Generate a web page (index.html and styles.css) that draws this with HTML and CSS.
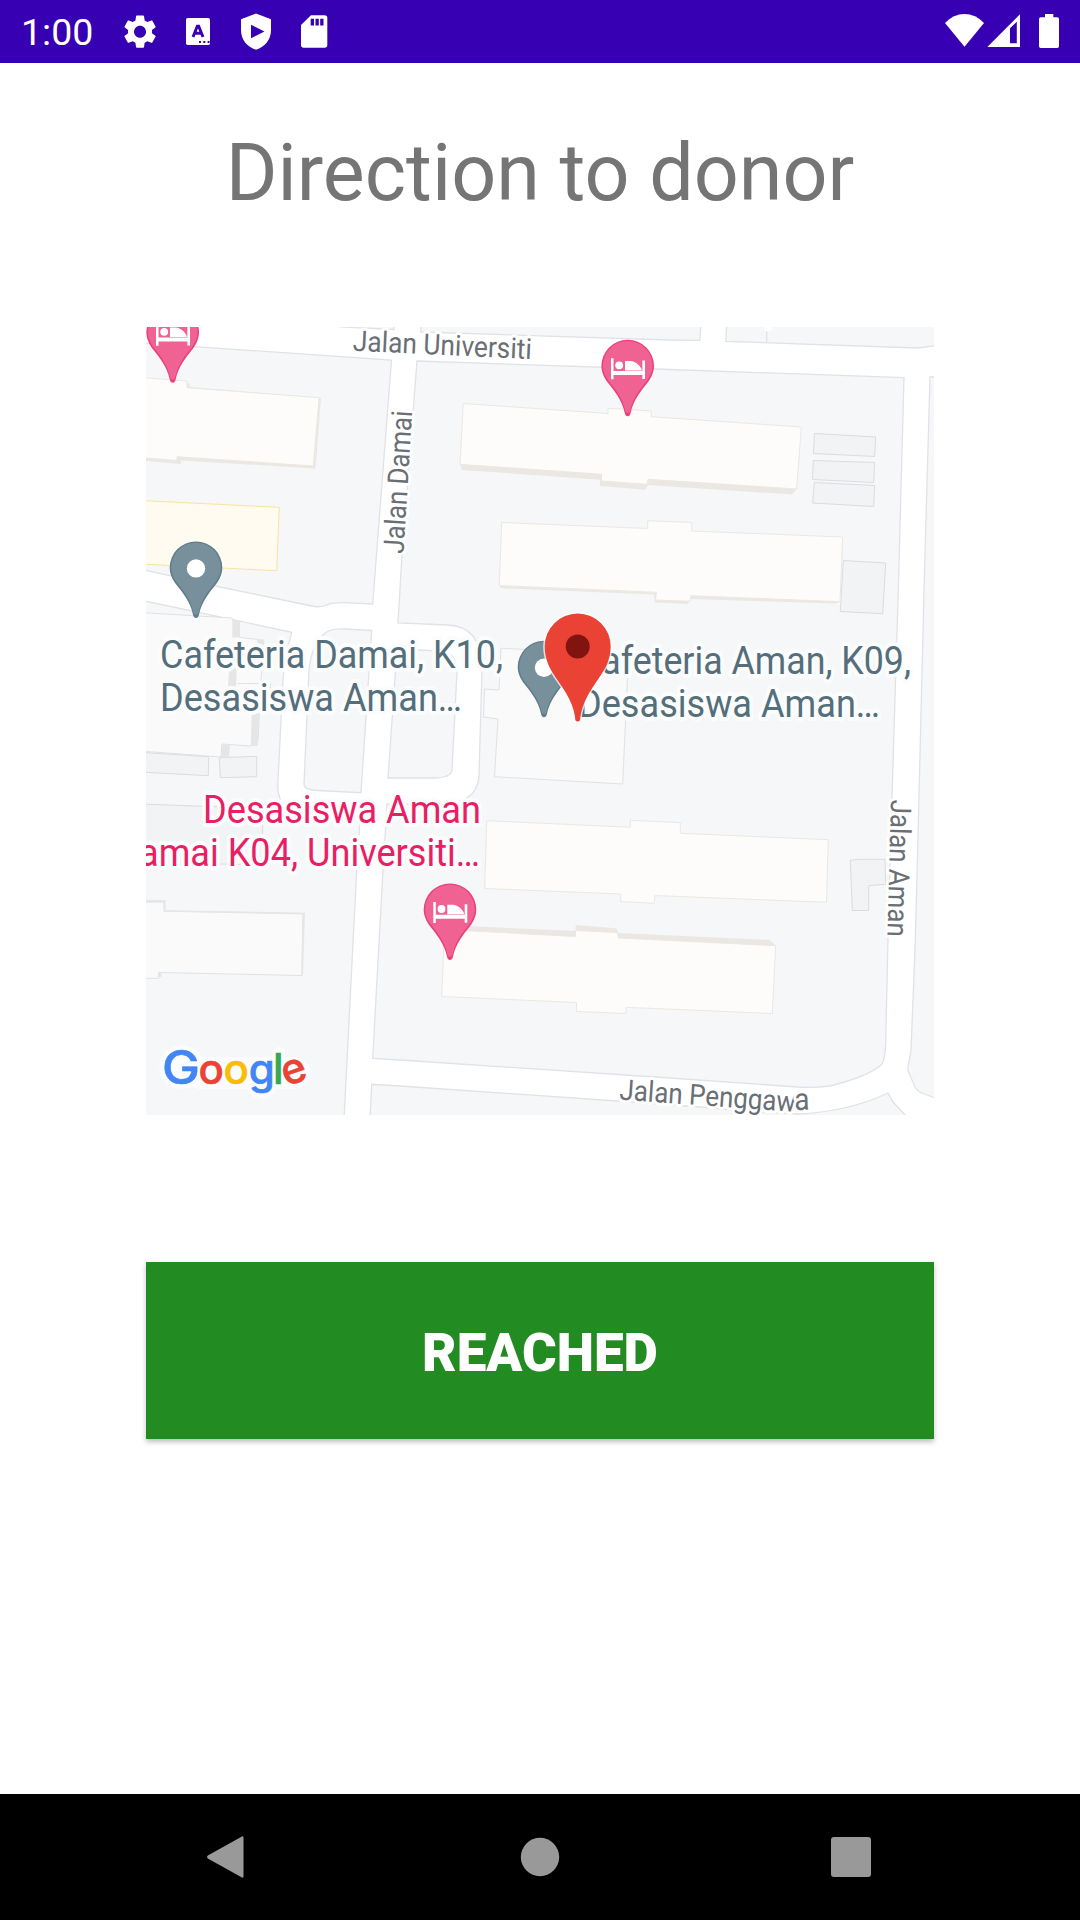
FILE: index.html
```html
<!DOCTYPE html>
<html lang="en">
<head>
<meta charset="utf-8">
<title>Direction to donor</title>
<link rel="stylesheet" href="styles.css">
</head>
<body>
<div class="screen">
  <header class="status">
    <span class="time">1:00</span>
    <svg class="status-left" width="210" height="40" viewBox="120 12 210 40" fill="#fff">
      <g transform="translate(120 11.6) scale(1.67)"><path d="M19.14 12.94c.04-.3.06-.61.06-.94 0-.32-.02-.64-.07-.94l2.03-1.58c.18-.14.23-.41.12-.61l-1.92-3.32c-.12-.22-.37-.29-.59-.22l-2.39.96c-.5-.38-1.03-.7-1.62-.94l-.36-2.54c-.04-.24-.24-.41-.48-.41h-3.84c-.24 0-.43.17-.47.41l-.36 2.54c-.59.24-1.13.57-1.62.94l-2.39-.96c-.22-.08-.47 0-.59.22L2.74 8.87c-.12.21-.08.47.12.61l2.03 1.58c-.05.3-.09.63-.09.94s.02.64.07.94l-2.03 1.58c-.18.14-.23.41-.12.61l1.92 3.32c.12.22.37.29.59.22l2.39-.96c.5.38 1.03.7 1.62.94l.36 2.54c.05.24.24.41.48.41h3.84c.24 0 .44-.17.47-.41l.36-2.54c.59-.24 1.13-.56 1.62-.94l2.39.96c.22.08.47 0 .59-.22l1.92-3.32c.12-.22.07-.47-.12-.61l-2.01-1.58zM12 15.6c-1.98 0-3.6-1.62-3.6-3.6s1.62-3.6 3.6-3.6 3.6 1.62 3.6 3.6-1.62 3.600-3.600 3.600z"/></g>
      <rect x="186" y="18" width="24" height="27" rx="1.8"/>
      <path d="M193 37 L197.300 26.200 H198.700 L203 37 M194.800 33.300 H201.200" fill="none" stroke="#3700b3" stroke-width="2.900"/>
      <path d="M199 41h2v2h-2zM203.300 41h2v2h-2zM207.600 41h2v2h-2z" fill="#3700b3"/>
      <path d="M256 13.500 L271 19.300 V30 C271 39.500 265 47 256 49.700 C247 47 241 39.500 241 30 V19.300 Z M251 24.800 V38.300 L264.500 31.500 Z" fill-rule="evenodd"/>
      <path d="M311 15.200 H324.500 Q327.300 15.200 327.300 18 V45 Q327.300 47.800 324.500 47.800 H303.700 Q301 47.800 301 45 V25 Z"/>
      <path d="M310.700 18.700h3.300v6.800h-3.300zM315.500 18.700h3.300v6.800h-3.300zM320.200 18.700h3.300v6.800h-3.300z" fill="#3700b3"/>
    </svg>
    <svg class="status-right" width="120" height="40" viewBox="942 12 120 40" fill="#fff">
      <path d="M945 23 Q953.500 14 964.500 14 Q975.500 14 984 23 L964.500 46.700 Z"/>
      <path d="M987.300 47 L1020 14.300 V47 Z M1010 28.300 V43.300 H1016.800 V21.800 Z" fill-rule="evenodd"/>
      <path d="M1045 14h8.300v3.300h4q1.700 0 1.700 1.700v27.200q0 1.700-1.700 1.700h-16.600q-1.700 0-1.700-1.700V19q0-1.700 1.700-1.700h4.300z"/>
    </svg>
  </header>

  <main class="content">
    <h1 class="title">Direction to donor</h1>

    <svg class="map" width="788" height="788" viewBox="146 327 788 788">
      <defs>
        <path id="drop" d="M0 50.300 C-1.500 50.300 -2.300 49.300 -2.800 47.500 C-6 33 -13 25.500 -20 16.500 C-23.500 12 -26.300 6 -26.300 0 A26.300 26.300 0 0 1 26.300 0 C26.300 6 23.500 12 20 16.500 C13 25.500 6 33 2.800 47.500 C2.300 49.300 1.500 50.300 0 50.300 Z"/>
        <g id="lodging">
          <use href="#drop" fill="#ec407a"/>
          <use href="#drop" fill="#f06292" transform="translate(0 -.3) scale(.94)"/>
          <path d="M-16.700 -7.700h2.500V5H14.700V-5.500H17.300V13H14.700V9H-14.200V13.300H-16.700ZM-2.700 -5H3C8 -4.500 12 -1 14 3.500V4.500H-2.700Z" fill="#fff"/>
          <circle cx="-8.500" cy="-.7" r="3.900" fill="#fff"/>
        </g>
        <g id="place">
          <use href="#drop" fill="#607d8b"/>
          <use href="#drop" fill="#78909c" transform="translate(0 -.3) scale(.94)"/>
          <circle cy=".7" r="9.200" fill="#fff"/>
        </g>
      </defs>

      <rect x="146" y="327" width="788" height="788" fill="#fff"/>

      <!-- land between the roads -->
      <g class="land">
        <path d="M140 343L391.500 360 372.700 604 345 602.700Q333 602.500 328 604.500Q320 608 312 606L220 587 140 569Z"/>
        <path d="M140 600L291.700 632.300Q284 660 283 680L277.700 787Q279 815 310 817L360 820 356.700 870 344 1120H140Z"/>
        <path d="M371.700 630.500L345 629Q329 628 323 635Q309 648 308.500 680L304 785Q305 790 318 790.500L361 792.700Z"/>
        <path d="M397 649L440 651Q457 652 457 672L452 770Q451 778 433 778L388 778Z"/>
        <path d="M417 361L670 369.500 904 377.700 898.300 590 892 797 888 938 885.700 1043Q885 1060 882 1064Q870 1076 830 1086Q815 1088 797 1087L670 1078 400 1060 372.700 1058.300 383 870 387 804 430 804Q478 807 479 775L482 670Q482 626 448 625L398 623 401.700 560Z"/>
        <path d="M940 377H930L924 590 917.700 850 915 950 911 1050 907.700 1070 915 1087Q918 1092 922 1093L940 1100Z"/>
        <path d="M888 1093L893 1102 908 1118H370L371.700 1084.300 400 1086 617 1101 700 1107Q750 1112 800 1114Q850 1111 888 1093Z"/>
        <path d="M420.500 320L421 332 670 340 700 340.300 701 320Z"/>
        <path d="M727 320L725.700 341.300 917 348 940 345V320Z"/>
        <path d="M340 320V327L394 329.500V320Z"/>
        <path d="M766.700 327V342"/>
      </g>
      <circle cx="768" cy="327" r="4.500" fill="#fff"/>

      <!-- plain buildings and courts -->
      <g class="court">
        <path d="M140 752.300L208.700 756.700 208.300 775.700 140 772Z"/>
        <path d="M219.300 757.700L256.700 756.300V776.700L220.300 777.700Z"/>
        <path d="M140 804L263 808.500 262 865 140 862Z"/>
        <path d="M814.500 433.500L875.700 437 874.700 456.500 813.300 453.500Z"/>
        <path d="M813.300 460.500L874.700 462.500 873.700 482.500 812.500 479.500Z"/>
        <path d="M814.300 482.500L874.700 485.500 873.700 506.500 812.700 503Z"/>
        <path d="M843.300 560.500L885.700 563 882.700 613.700 840.300 611.500Z"/>
        <path d="M850.300 860.300L858.500 859.300H885L885.700 884.300 868.700 885.700V910.500H852.300Z"/>
      </g>
      <g class="hall">
        <path d="M140 612.500L232 618 240 637.500 263 640 261 682 258 740 251 746 222 744 221 757 140 751Z"/>
        <path d="M501 648.300L628.500 654 622.700 784 494.500 776.700 498 719 483.500 717 484.500 689 499 690Z"/>
        <path d="M140 900.700L164.500 901.700V911L303 913.500 302 975.500 158.700 972.500V978.300H140Z"/>
      </g>
      <path d="M237.500 683.500H270.500V700" fill="none" stroke="#e2e3e5"/>
      <g fill="#e6e6e6">
        <path d="M232.300 619L240 621V637.500H232.300ZM257 639L264.500 640 264 645H257ZM229.300 667H236.700L236 687H228ZM251.700 713H259L257.700 746H250.700ZM222.300 744L230 745 229 757.500H221Z"/>
        <path d="M140 900H165.500V910.300L305 912.700 303 975H301.300L302.300 914.500 163.300 911.700V902.700H140ZM158.300 972H162L161 977H158.300Z"/>
      </g>

      <!-- residential blocks with their raised edges -->
      <g class="edge">
        <path d="M187 381L191 387 319 397.700 321 399 315.500 468.500 181 460.500V464L146 461V455Z"/>
        <path d="M460 464L462 470 600 479.700V486L645.500 489.700 648 485 792 494.500 796.700 489 640 460Z"/>
        <path d="M499 585.700L501 588.300 654 594.500 655 602.500 688 604 691 599 836 603.500 840 601Z"/>
        <path d="M444 925L575.700 931V925L616 928.300 618.500 933 770 940 775.700 945.700 600 960 444 950Z"/>
      </g>
      <g class="block">
        <path d="M140 377.500L187 381V387.700L319 397.700 313.300 466 177 456.700V460.500L140 457.500Z"/>
        <path d="M463.300 403.500L608 413.500V408.300L651.300 411V416.700L801.300 427 796.700 489 648 479.300 646.700 484.300 601.300 481 601.700 474.300 460 464.300Z"/>
        <path d="M501.700 522.500L647.700 528.500V520.700L691.700 522.500V531L842.700 537 840 601.700 691 595.700 690 601.300 655.300 600 656.500 592.300 499.300 585.500Z"/>
        <path d="M486.700 820.700L630.300 827.300V820.300L680.300 822.700V833.300L828.300 839.700 826.500 902.300 655 895.500 654 903.300 620.700 901.500V894L484.700 888.500Z"/>
        <path d="M444.500 929.500L575.500 936.500V930.500L617.500 932.500 618.500 938 775.700 945.700 772.300 1013.500 626 1007.300V1013.500L576.500 1011.500V1002.500L441.700 996.500Z"/>
      </g>
      <path d="M140 500.500L279.300 507.300 276.700 570.700 140 564Z" fill="#fffbf0" stroke="#fae3a0"/>

      <!-- street names -->
      <g class="street">
        <text transform="translate(352.500 350.700) rotate(2.700)" textLength="179" lengthAdjust="spacingAndGlyphs">Jalan Universiti</text>
        <text transform="translate(403.500 554) rotate(-86.500)" textLength="143" lengthAdjust="spacingAndGlyphs">Jalan Damai</text>
        <text transform="translate(891 799.500) rotate(91.500)" textLength="137" lengthAdjust="spacingAndGlyphs">Jalan Aman</text>
        <text transform="translate(619 1099.500) rotate(4) scale(.902 1)">Jalan Penggaw<tspan class="last-letter" dx="-1" dy="-1.500" rotate="-6">a</tspan></text>
      </g>

      <use href="#lodging" x="172.700" y="332.500"/>
      <use href="#lodging" x="627.700" y="366"/>
      <use href="#lodging" x="450" y="909.700"/>
      <use href="#place" x="196" y="567.700"/>
      <use href="#place" x="544" y="667"/>

      <!-- place names -->
      <g class="poi">
        <text x="160" y="667.500" textLength="343" lengthAdjust="spacingAndGlyphs">Cafeteria Damai, K10,</text>
        <text x="160" y="710.500" textLength="302" lengthAdjust="spacingAndGlyphs">Desasiswa Aman…</text>
        <text x="578" y="673.500" textLength="333" lengthAdjust="spacingAndGlyphs">Cafeteria Aman, K09,</text>
        <text x="578" y="716.500" textLength="302" lengthAdjust="spacingAndGlyphs">Desasiswa Aman…</text>
      </g>
      <g class="poi poi-stay">
        <text x="203" y="823" textLength="278" lengthAdjust="spacingAndGlyphs">Desasiswa Aman</text>
        <text x="139" y="866" textLength="341" lengthAdjust="spacingAndGlyphs">amai K04, Universiti…</text>
      </g>

      <!-- donor marker -->
      <path d="M577.700 721.500 C575.500 721.500 575 720 575 717 C573.500 704 566 692 556 678 C550 669 544.700 660 544.700 646.500 A33 33 0 0 1 610.700 646.500 C610.700 660 605 669 599 678 C589 692 582 704 580.400 717 C580.300 720 580 721.500 577.700 721.500 Z" fill="#ea4335" stroke="#fff" stroke-width="3" stroke-opacity=".75" paint-order="stroke"/>
      <circle cx="577.700" cy="646.500" r="12" fill="#811411"/>

      <g fill="none" stroke="#fbfcfd" stroke-linecap="round">
        <circle cx="181.500" cy="1067" r="11" stroke-width="22"/>
        <path d="M200 1073H294" stroke-width="32"/>
        <path d="M262 1074V1085" stroke-width="29"/>
        <path d="M278.500 1054V1080" stroke-width="14"/>
      </g>
      <g class="brand">
        <text x="162" y="1084" class="brand-cap" fill="#4285f4" stroke="#4285f4" textLength="38" lengthAdjust="spacingAndGlyphs">G</text>
        <text x="198.500" y="1084" fill="#ea4335" stroke="#ea4335">o</text>
        <text x="223.500" y="1084" fill="#fbbc05" stroke="#fbbc05">o</text>
        <text x="248.700" y="1084" fill="#4285f4" stroke="#4285f4">g</text>
        <text x="273" y="1084" fill="#34a853" stroke="#34a853">l</text>
        <text transform="translate(286 1086.500) rotate(-19)" fill="#ea4335" stroke="#ea4335">e</text>
      </g>
    </svg>

    <button class="reached" type="button">REACHED</button>
  </main>

  <nav class="navbar">
    <svg width="40" height="44" viewBox="0 0 40 44"><path d="M36.500 1.800Q38.500 .500 38.500 3V41Q38.500 43.500 36.500 42.200L2.800 23.500Q1 22 2.800 20.500Z" fill="#999"/></svg>
    <svg width="40" height="40" viewBox="0 0 40 40"><circle cx="20" cy="20" r="19.200" fill="#999"/></svg>
    <svg width="40" height="40" viewBox="0 0 40 40"><rect width="40" height="40" rx="3" fill="#999"/></svg>
  </nav>
</div>
</body>
</html>
```
FILE: styles.css
```css
* {
  box-sizing: border-box;
}

body {
  margin: 0;
  background: #fff;
  font-family: Roboto, "Liberation Sans", sans-serif;
}

.screen {
  display: flex;
  flex-direction: column;
  width: 1080px;
  height: 1920px;
  overflow: hidden;
}

.status {
  display: flex;
  align-items: flex-start;
  height: 63px;
  padding: 12px 18px 0 21px;
  background: #3700b3;
  color: #fff;
}

.time {
  width: 99px;
  font-size: 37.5px;
  line-height: 41px;
}

.status-right {
  margin-left: auto;
}

.content {
  flex: 1;
  display: flex;
  flex-direction: column;
  align-items: center;
}

.title {
  margin: 64px 0 0;
  height: 200px;
  color: #757575;
  font-size: 79px;
  font-weight: 400;
  line-height: 92px;
  white-space: nowrap;
}

.map {
  display: block;
  flex: none;
}

.land {
  fill: #f5f7f9;
  stroke: #e1e2e7;
  stroke-width: 1.3;
}

.court {
  fill: #f1f3f4;
  stroke: #dadce0;
}

.hall {
  fill: #fafafa;
  stroke: #e0e1e3;
}

.edge {
  fill: #ebe8e3;
}

.block {
  fill: #fdfcfa;
  stroke: #ede7e1;
}

.street {
  fill: #696f74;
  stroke: #fff;
  stroke-width: 6px;
  stroke-linejoin: round;
  paint-order: stroke;
  font-size: 28.8px;
}

.street .last-letter {
  font-size: 31px;
}

.poi {
  fill: #546e7a;
  stroke: #fbfcfd;
  stroke-width: 8px;
  stroke-linejoin: round;
  paint-order: stroke;
  font-size: 38.8px;
}

.poi-stay {
  fill: #e91e63;
}

.brand {
  stroke-width: .6px;
  font-family: Inter, sans-serif;
  font-size: 42px;
  font-weight: 500;
}

.brand-cap {
  font-size: 47px;
}

.reached {
  width: 788px;
  height: 177px;
  margin-top: 147px;
  padding: 6px 0 0;
  border: 0;
  background: #228b22;
  box-shadow: 0 3px 5px rgba(0, 0, 0, .25);
  color: #fff;
  font: 900 53px/1 Roboto, sans-serif;
}

.navbar {
  display: grid;
  grid-template-columns: 40px 1fr 40px;
  align-items: center;
  justify-items: center;
  height: 126px;
  padding: 0 209px 0 205px;
  background: #000;
}

.navbar svg:nth-child(2) {
  margin-left: 4px;
}
```
